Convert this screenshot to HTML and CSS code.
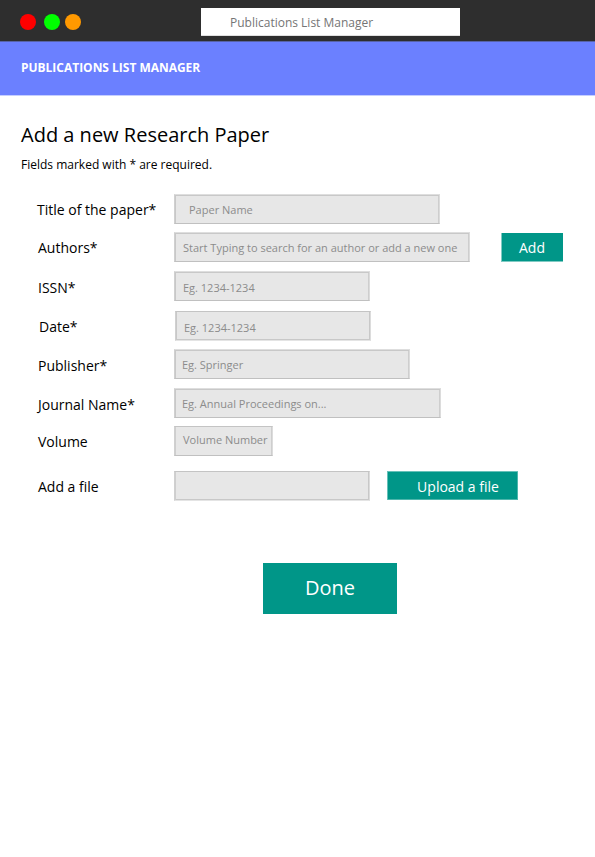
FILE: index.html
```html
<!DOCTYPE html>
<html lang="en">
<head>
<meta charset="utf-8">
<title>Publications List Manager</title>
<link rel="stylesheet" href="styles.css">
</head>
<body>
<div class="window-bar">
  <span class="dot dot-red"></span>
  <span class="dot dot-green"></span>
  <span class="dot dot-orange"></span>
  <div class="address">Publications List Manager</div>
</div>
<header class="app-header">PUBLICATIONS LIST MANAGER</header>
<main>
  <h1>Add a new Research Paper</h1>
  <p class="hint">Fields marked with * are required.</p>
  <form class="paper-form">
    <div class="row row-title"><label>Title of the paper*</label><div class="field">Paper Name</div></div>
    <div class="row row-authors"><label>Authors*</label><div class="field">Start Typing to search for an author or add a new one</div><button type="button" class="btn btn-add">Add</button></div>
    <div class="row row-issn"><label>ISSN*</label><div class="field">Eg. 1234-1234</div></div>
    <div class="row row-date"><label>Date*</label><div class="field">Eg. 1234-1234</div></div>
    <div class="row row-publisher"><label>Publisher*</label><div class="field">Eg. Springer</div></div>
    <div class="row row-journal"><label>Journal Name*</label><div class="field">Eg. Annual Proceedings on...</div></div>
    <div class="row row-volume"><label>Volume</label><div class="field">Volume Number</div></div>
    <div class="row row-file"><label>Add a file</label><div class="field"></div><button type="button" class="btn btn-upload">Upload a file</button></div>
    <button type="button" class="btn btn-done">Done</button>
  </form>
</main>
</body>
</html>
```
FILE: styles.css
```css
* { box-sizing: border-box; }
body {
  margin: 0;
  background: #fff;
  color: #000;
  font-family: "Open Sans", sans-serif;
}
.window-bar {
  display: flex;
  height: 41px;
  background: #2e2e2e;
  padding: 14px 0 0 20px;
}
.dot { width: 16px; height: 16px; border-radius: 50%; }
.dot-red { background: #f00; }
.dot-green { background: #0f0; margin-left: 7.5px; }
.dot-orange { background: #f90; margin-left: 5.7px; }
.address {
  width: 259px;
  height: 28px;
  margin: -6px 0 0 119.8px;
  padding-left: 29px;
  border-bottom: 1px solid #e0e0e0;
  background: #fff;
  color: #757575;
  font-size: 12px;
  line-height: 29px;
  white-space: nowrap;
}
.app-header {
  height: 55px;
  padding-left: 21px;
  border-top: 1px solid #5763a8;
  border-bottom: 1px solid #c5ceff;
  background: #6b80ff;
  color: #fff;
  font-size: 11.98px;
  font-weight: 700;
  line-height: 52px;
}
h1 {
  margin: 25px 0 0 21px;
  font-size: 20px;
  font-weight: 400;
  line-height: 28px;
}
.hint { margin: 7px 0 0 21px; font-size: 12px; line-height: 18px; }
.paper-form { margin-top: 20px; }
.row { display: flex; height: 30px; padding-left: 38px; white-space: nowrap; }
.row label { width: 136px; font-size: 14px; line-height: 32px; }
.field {
  height: 30px;
  padding-left: 8px;
  border: 1px solid;
  border-color: #dedede #dcdcdc #c0c0c0 #d0d0d0;
  background: #e7e7e7;
  box-shadow: inset 1px 1px #c8c8c8, inset -1px 0 #cecece;
  color: #8c8c8c;
  font-size: 11px;
  line-height: 30px;
}
.btn {
  padding: 0;
  border: 0;
  background: #009688;
  color: #fff;
  font-family: inherit;
  font-size: 14px;
}
.row-title { padding-left: 37px; }
.row-title label { width: 137px; }
.row-title .field { width: 266px; padding-left: 14px; }
.row-authors { margin-top: 8px; }
.row-authors .field { width: 296px; }
.row-issn { margin-top: 9px; }
.row-issn label, .row-publisher label, .row-journal label { line-height: 34px; }
.row-issn .field { width: 196px; line-height: 31px; }
.row-date { margin-top: 10px; padding-left: 39px; }
.row-date .field {
  width: 196px;
  border-color: #c4c4c4 #dcdcdc #e4e4e4 #d0d0d0;
  box-shadow: inset 1px 0 #c8c8c8, inset -1px -1px #c8c8c8;
  line-height: 31px;
}
.row-publisher { margin-top: 8px; }
.row-publisher .field { width: 236px; padding-left: 7px; }
.row-journal { margin-top: 9px; }
.row-journal .field { width: 267px; padding-left: 7px; }
.row-volume { margin-top: 8px; }
.row-volume .field {
  width: 99px;
  border-top-color: #c4c4c4;
  box-shadow: inset 1px 0 #cecece, inset -1px 0 #cecece;
  line-height: 26px;
}
.row-file { margin-top: 15px; }
.row-file .field {
  width: 196px;
  border-color: #c4c4c4 #dcdcdc #e4e4e4 #d0d0d0;
  box-shadow: inset 1px 0 #cecece, inset -1px -1px #c8c8c8;
}
.btn-add {
  width: 62px;
  height: 29px;
  margin: 1px 0 0 31px;
  padding-top: 1px;
  border-bottom: 1px solid #80cac3;
  box-shadow: inset 1px 0 #80cac3;
}
.btn-upload {
  width: 131px;
  height: 29px;
  margin: 0 0 0 17px;
  padding: 2px 0 0 11px;
  box-shadow: inset 1px 1px #66c0b8, inset -1px -1px #4db6ac;
}
.btn-done {
  display: block;
  width: 134px;
  height: 51px;
  margin: 62px 0 0 263px;
  padding-bottom: 2px;
  font-size: 20px;
}
```
